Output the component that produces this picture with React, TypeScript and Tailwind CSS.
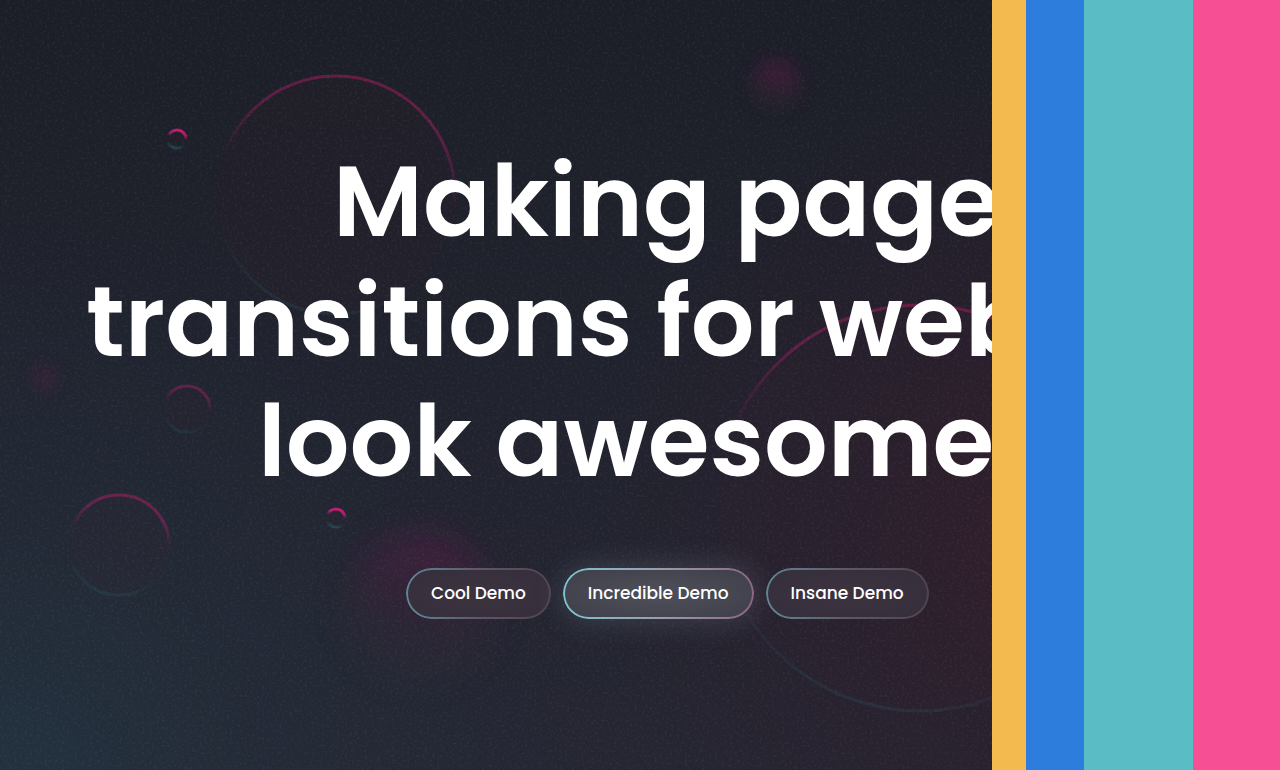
const rings = [
  { cx: 336, cy: 195, r: 119, width: 3, opacity: 0.34 },
  { cx: 920, cy: 508, r: 203, width: 3, opacity: 0.34 },
  { cx: 119, cy: 545, r: 50, width: 3, opacity: 0.36 },
  { cx: 187, cy: 409, r: 23, width: 3, opacity: 0.32 },
  { cx: 177, cy: 139, r: 9, width: 3, opacity: 0.8 },
  { cx: 336, cy: 518, r: 9, width: 3, opacity: 0.8 },
];

const stripes = [
  { name: "amber", className: "w-[34px] bg-[#f3ba50]" },
  { name: "blue", className: "w-[58px] bg-[#2d7ddd]" },
  { name: "teal", className: "w-[109px] bg-[#5abdc6]" },
  { name: "pink", className: "w-[87px] bg-[#f74f93]" },
];

function Backdrop() {
  return (
    <svg
      aria-hidden="true"
      className="absolute inset-0 h-full w-full"
      viewBox="0 0 992 770"
      preserveAspectRatio="xMidYMid slice"
    >
      <defs>
        <linearGradient id="base" x1="0" y1="0" x2="0" y2="1">
          <stop offset="0" stopColor="#1c1e27" />
          <stop offset="0.5" stopColor="#20222d" />
          <stop offset="1" stopColor="#252632" />
        </linearGradient>
        <radialGradient id="sea" gradientUnits="userSpaceOnUse" cx="0" cy="790" r="600">
          <stop offset="0" stopColor="#223644" stopOpacity="0.75" />
          <stop offset="0.5" stopColor="#22313e" stopOpacity="0.35" />
          <stop offset="1" stopColor="#22313e" stopOpacity="0" />
        </radialGradient>
        <radialGradient id="wine" gradientUnits="userSpaceOnUse" cx="1080" cy="540" r="480">
          <stop offset="0" stopColor="#331d2a" stopOpacity="0.9" />
          <stop offset="0.5" stopColor="#2e1c2a" stopOpacity="0.45" />
          <stop offset="1" stopColor="#2e1c2a" stopOpacity="0" />
        </radialGradient>
        <linearGradient id="ring" x1="0.62" y1="0" x2="0.38" y2="1">
          <stop offset="0" stopColor="#f01878" />
          <stop offset="0.2" stopColor="#cc1c7c" />
          <stop offset="0.46" stopColor="#a01c70" stopOpacity="0" />
          <stop offset="0.74" stopColor="#2a6274" stopOpacity="0" />
          <stop offset="1" stopColor="#2a6878" stopOpacity="0.6" />
        </linearGradient>
        <linearGradient id="orb" x1="0.6" y1="0" x2="0.4" y2="1">
          <stop offset="0" stopColor="#6c184c" />
          <stop offset="0.35" stopColor="#581c48" stopOpacity="0.75" />
          <stop offset="0.55" stopColor="#4a2038" stopOpacity="0.5" />
          <stop offset="1" stopColor="#3a3040" stopOpacity="0.4" />
        </linearGradient>
        <filter id="soft" x="-60%" y="-60%" width="220%" height="220%">
          <feGaussianBlur stdDeviation="18" />
        </filter>
        <filter id="softSmall" x="-100%" y="-100%" width="300%" height="300%">
          <feGaussianBlur stdDeviation="9" />
        </filter>
        <filter id="grain" x="0" y="0" width="100%" height="100%">
          <feTurbulence type="fractalNoise" baseFrequency="0.4" numOctaves="2" seed="4" />
          <feColorMatrix values="0 0 0 0 0.6  0 0 0 0 0.7  0 0 0 0 0.75  3 0 0 0 -1.5" />
        </filter>
      </defs>
      <rect width="992" height="770" fill="url(#base)" />
      <rect width="992" height="770" fill="url(#sea)" />
      <rect width="992" height="770" fill="url(#wine)" />
      <circle cx="420" cy="608" r="74" fill="url(#orb)" opacity="0.45" filter="url(#soft)" />
      <circle cx="775" cy="86" r="24" fill="url(#orb)" opacity="0.6" filter="url(#softSmall)" />
      <circle cx="45" cy="378" r="13" fill="#701c4c" opacity="0.28" filter="url(#softSmall)" />
      {rings.map((ring) => (
        <g key={`${ring.cx}-${ring.cy}`}>
          <circle cx={ring.cx} cy={ring.cy} r={ring.r} fill="#501c34" opacity="0.06" />
          <circle
            cx={ring.cx}
            cy={ring.cy}
            r={ring.r}
            fill="none"
            stroke="url(#ring)"
            strokeWidth={ring.width}
            opacity={ring.opacity}
          />
        </g>
      ))}
      <rect width="992" height="770" filter="url(#grain)" opacity="0.06" />
    </svg>
  );
}

function DemoButton({ label, active = false }: { label: string; active?: boolean }) {
  return (
    <button
      type="button"
      className={
        active
          ? "relative h-[51px] shrink-0 rounded-full bg-[radial-gradient(ellipse_at_center,#4f5059,#3d3e49)] px-[25px] shadow-[0_0_28px_4px_rgba(150,165,185,0.2)]"
          : "relative h-[51px] shrink-0 rounded-full bg-[radial-gradient(ellipse_at_center,#3d333f,#342e3b)] px-[25px]"
      }
    >
      <span
        className={
          active
            ? "absolute inset-0 rounded-full bg-linear-to-r from-[#7cc3cf] via-[#9a9cac] to-[#8f6585] p-[2px] [mask:linear-gradient(#000_0_0)_content-box_exclude,linear-gradient(#000_0_0)]"
            : "absolute inset-0 rounded-full bg-linear-to-r from-[#5f8796] via-[#5d5866] to-[#54424f] p-[2px] [mask:linear-gradient(#000_0_0)_content-box_exclude,linear-gradient(#000_0_0)]"
        }
      />
      <span className="relative text-[17px] leading-6 font-medium">{label}</span>
    </button>
  );
}

export default function App() {
  return (
    <div className="flex min-h-screen overflow-hidden bg-[#1c1e27] font-['Poppins','Inter',sans-serif] text-white">
      <main className="relative min-w-0 flex-1 overflow-hidden">
        <Backdrop />
        <div className="relative pt-[141px] pb-20">
          <h1 className="text-[100px] leading-[120px] font-semibold whitespace-nowrap">
            <span className="block pl-[333px]">Making page</span>
            <span className="block pl-[86px]">transitions for web</span>
            <span className="block pl-[258px]">look awesome</span>
          </h1>
          <div className="mt-[67px] flex gap-3 pl-[406px]">
            <DemoButton label="Cool Demo" />
            <DemoButton label="Incredible Demo" active />
            <DemoButton label="Insane Demo" />
          </div>
        </div>
      </main>
      <div aria-hidden="true" className="flex shrink-0">
        {stripes.map((stripe) => (
          <div key={stripe.name} className={stripe.className} />
        ))}
      </div>
    </div>
  );
}
